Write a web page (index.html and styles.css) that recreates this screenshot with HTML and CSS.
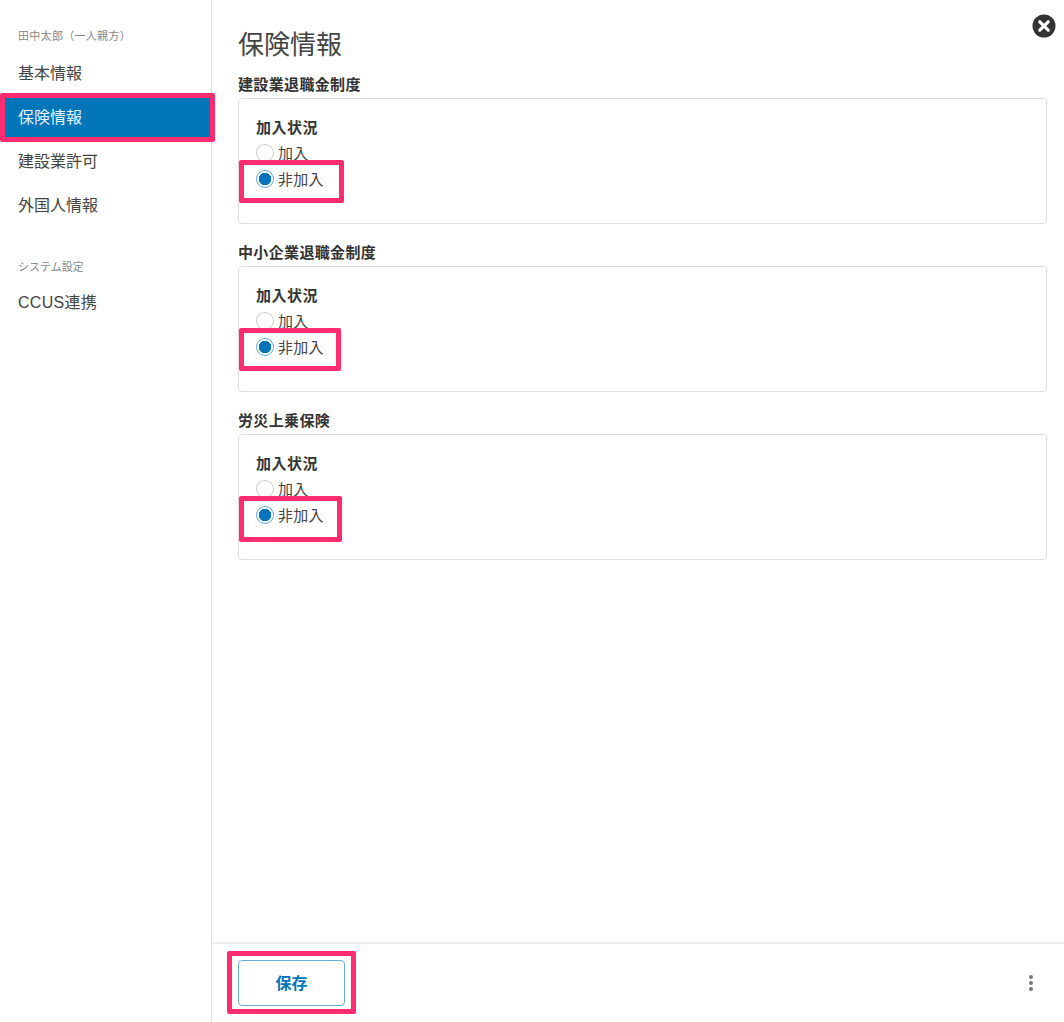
FILE: index.html
```html
<!DOCTYPE html>
<html lang="ja">
<head>
    <meta charset="UTF-8">
    <meta name="viewport" content="width=device-width, initial-scale=1.0">
    <title>保険情報</title>
    <link rel="stylesheet" href="styles.css">
</head>
<body>
    <div class="page">
        <nav class="sidebar">
            <p class="side-title side-title-first">田中太郎（一人親方）</p>
            <a class="side-item">基本情報</a>
            <a class="side-item active">保険情報<span class="mark mark-side"></span></a>
            <a class="side-item">建設業許可</a>
            <a class="side-item">外国人情報</a>
            <p class="side-title side-title-second">システム設定</p>
            <a class="side-item side-item-latin">CCUS連携</a>
        </nav>

        <main class="main">
            <div class="content">
                <button class="close-btn" aria-label="閉じる">
                    <svg width="24" height="24" viewBox="0 0 24 24">
                        <circle cx="12" cy="12" r="11.5" fill="#333"/>
                        <path d="M7.8 7.8l8.4 8.4M16.2 7.8l-8.4 8.4" stroke="#fff" stroke-width="3.2" stroke-linecap="round"/>
                    </svg>
                </button>
                <h1 class="title">保険情報</h1>

                <section class="section">
                    <h2 class="section-title">建設業退職金制度</h2>
                    <div class="card">
                        <div class="field-label">加入状況</div>
                        <label class="radio-row"><input type="radio" name="r1">加入</label>
                        <label class="radio-row"><input type="radio" name="r1" checked>非加入<span class="mark mark-radio-1"></span></label>
                    </div>
                </section>

                <section class="section">
                    <h2 class="section-title">中小企業退職金制度</h2>
                    <div class="card">
                        <div class="field-label">加入状況</div>
                        <label class="radio-row"><input type="radio" name="r2">加入</label>
                        <label class="radio-row"><input type="radio" name="r2" checked>非加入<span class="mark mark-radio-2"></span></label>
                    </div>
                </section>

                <section class="section">
                    <h2 class="section-title">労災上乗保険</h2>
                    <div class="card">
                        <div class="field-label">加入状況</div>
                        <label class="radio-row"><input type="radio" name="r3">加入</label>
                        <label class="radio-row"><input type="radio" name="r3" checked>非加入<span class="mark mark-radio-3"></span></label>
                    </div>
                </section>
            </div>

            <footer class="footer">
                <button class="save-btn">保存<span class="mark mark-save"></span></button>
                <div class="more" aria-label="その他">
                    <span class="dot"></span>
                    <span class="dot"></span>
                    <span class="dot"></span>
                </div>
            </footer>
        </main>
    </div>
</body>
</html>
```

FILE: styles.css
```css
* {
    box-sizing: border-box;
    margin: 0;
    padding: 0;
    font-family: "Liberation Sans", "Noto Sans CJK JP", sans-serif;
    text-spacing-trim: space-all;
}

html, body {
    height: 100%;
    overflow: hidden;
    background: white;
    color: #333;
}

.page {
    display: flex;
    height: 100vh;
}

.sidebar {
    width: 212px;
    flex-shrink: 0;
    padding-top: 25px;
    border-right: 1px solid #ddd;
}

.side-title {
    height: 20px;
    padding-left: 18px;
    font-size: 11px;
    line-height: 22px;
    color: #888;
}

.side-title-first {
    letter-spacing: 0.3px;
}

.side-title-second {
    margin-top: 29px;
}

.side-item {
    position: relative;
    display: block;
    height: 44px;
    padding-left: 18px;
    font-size: 16px;
    line-height: 46px;
    color: #444;
}

.side-item:first-of-type {
    margin-top: 6px;
}

.side-title-second + .side-item {
    margin-top: 4px;
}

.side-item-latin {
    letter-spacing: 0.3px;
}

.side-item.active {
    background: #0075b8;
    color: #e8f3fa;
}

.mark {
    position: absolute;
    border: 5px solid #ff2d6f;
    border-radius: 2px;
    pointer-events: none;
}

.mark-side {
    left: 0;
    top: -2px;
    width: 215px;
    height: 49px;
}

.main {
    flex: 1;
    min-width: 0;
    display: flex;
    flex-direction: column;
}

.content {
    position: relative;
    flex: 1;
    padding: 26px 17px 0 26px;
}

.close-btn {
    position: absolute;
    top: 14px;
    right: 8px;
    width: 24px;
    height: 24px;
    border: none;
    background: none;
}

.title {
    height: 36px;
    font-size: 26px;
    font-weight: 400;
    line-height: 38px;
    color: #444;
}

.section-title {
    height: 25px;
    margin-top: 11px;
    font-size: 15px;
    font-weight: 700;
    line-height: 24px;
    letter-spacing: 0.35px;
    color: #333;
}

.section + .section .section-title {
    margin-top: 17px;
}

.card {
    height: 126px;
    padding: 18px 17px 0;
    border: 1px solid #ddd;
    border-radius: 4px;
}

.field-label {
    height: 24px;
    font-size: 15px;
    font-weight: 700;
    line-height: 22px;
    letter-spacing: 0.5px;
    color: #333;
}

.radio-row {
    position: relative;
    display: flex;
    align-items: center;
    height: 26px;
    padding-bottom: 4px;
    font-size: 15px;
    letter-spacing: 0.3px;
    color: #444;
}

.radio-row input {
    appearance: none;
    width: 18px;
    height: 18px;
    margin: 2px 4px 0 0;
    border: 1px solid #ccc;
    border-radius: 50%;
    background: white;
}

.radio-row input:checked {
    border-color: #5aa8d6;
    background: radial-gradient(circle, #0075b8 0, #0075b8 6px, white 6.5px);
}

.mark-radio-1 {
    left: -17px;
    top: -7px;
    width: 105px;
    height: 43px;
}

.mark-radio-2 {
    left: -17px;
    top: -7px;
    width: 102px;
    height: 43px;
}

.mark-radio-3 {
    left: -17px;
    top: -7px;
    width: 103px;
    height: 46px;
}

.footer {
    display: flex;
    align-items: center;
    justify-content: space-between;
    height: 80px;
    padding: 0 31px 0 26px;
    border-top: 2px solid #eee;
}

.save-btn {
    position: relative;
    width: 107px;
    height: 46px;
    padding-bottom: 3px;
    border: 1px solid #6aaed8;
    border-radius: 4px;
    background: white;
    font-size: 16px;
    font-weight: 700;
    color: #0075b8;
}

.mark-save {
    left: -12px;
    top: -10px;
    width: 129px;
    height: 63px;
}

.more {
    display: flex;
    flex-direction: column;
    gap: 2px;
}

.dot {
    width: 4px;
    height: 4px;
    border-radius: 50%;
    background: #777;
}
```
